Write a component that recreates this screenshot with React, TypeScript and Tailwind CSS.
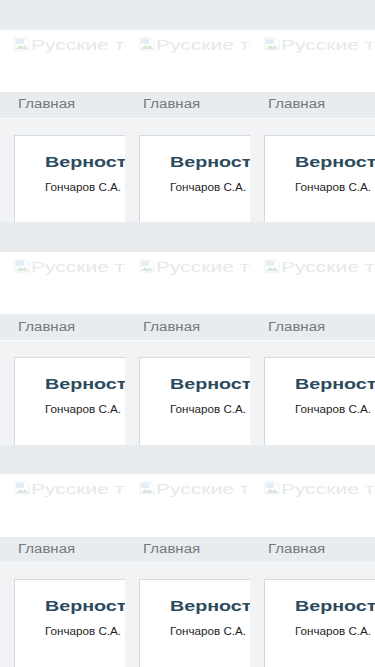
import React from 'react';

const BrokenImage: React.FC = () => (
  <svg width="16" height="14" viewBox="0 0 16 14" className="shrink-0 opacity-30">
    <path d="M1 1h10l4 3v9H1z" fill="#fff" stroke="#c8cdd2" strokeWidth="1" />
    <path d="M2 12l4-4 3 2 2-2 3 4z" fill="#7fb47f" />
    <path d="M2 2h8v5H2z" fill="#a9c9e8" />
  </svg>
);

const Tile: React.FC = () => {
  return (
    <div className="min-w-0 min-h-0 overflow-hidden flex flex-col bg-[#f1f3f5]">
      {/* top strip */}
      <div className="h-[29.5px] shrink-0 bg-[#e9ecef]" />

      {/* logo area, image did not load */}
      <div className="h-[62.5px] shrink-0 bg-white flex items-start gap-[1px] pl-[14px] pt-[7px]">
        <BrokenImage />
        <span className="inline-block origin-left scale-x-[1.4] whitespace-nowrap text-[15px] leading-none text-[#e6e8eb]">
          Русские тексты
        </span>
      </div>

      {/* breadcrumb */}
      <div className="h-[26.5px] shrink-0 bg-[#e9ecef] border-b border-[#f8f9fa] flex items-center pl-[18px]">
        <span className="inline-block origin-left scale-x-[1.2] text-[12.5px] text-[#72787e] whitespace-nowrap">
          Главная
        </span>
      </div>

      {/* card */}
      <div className="flex-1 min-h-0 pt-[16px] pl-[14px]">
        <div className="h-full w-[220px] bg-white border-l border-t border-[#d5d9dd] pl-[30px] pt-[15px]">
          <h2 className="origin-left scale-x-[1.27] whitespace-nowrap text-[15.5px] leading-[22px] font-bold text-[#2b4a5e]">
            Верность
          </h2>
          <p className="mt-[6px] origin-left scale-x-[1.11] whitespace-nowrap text-[10.5px] leading-[16px] text-[#1f2327]">
            Гончаров С.А.
          </p>
        </div>
      </div>
    </div>
  );
};

const App: React.FC = () => {
  const tiles = Array.from({ length: 9 }, (_, i) => i);

  return (
    <div className="w-[375px] h-[667px] grid grid-cols-3 grid-rows-3 bg-white font-['Liberation_Sans',Arial,sans-serif]">
      {tiles.map((i) => (
        <Tile key={i} />
      ))}
    </div>
  );
};

export default App;
